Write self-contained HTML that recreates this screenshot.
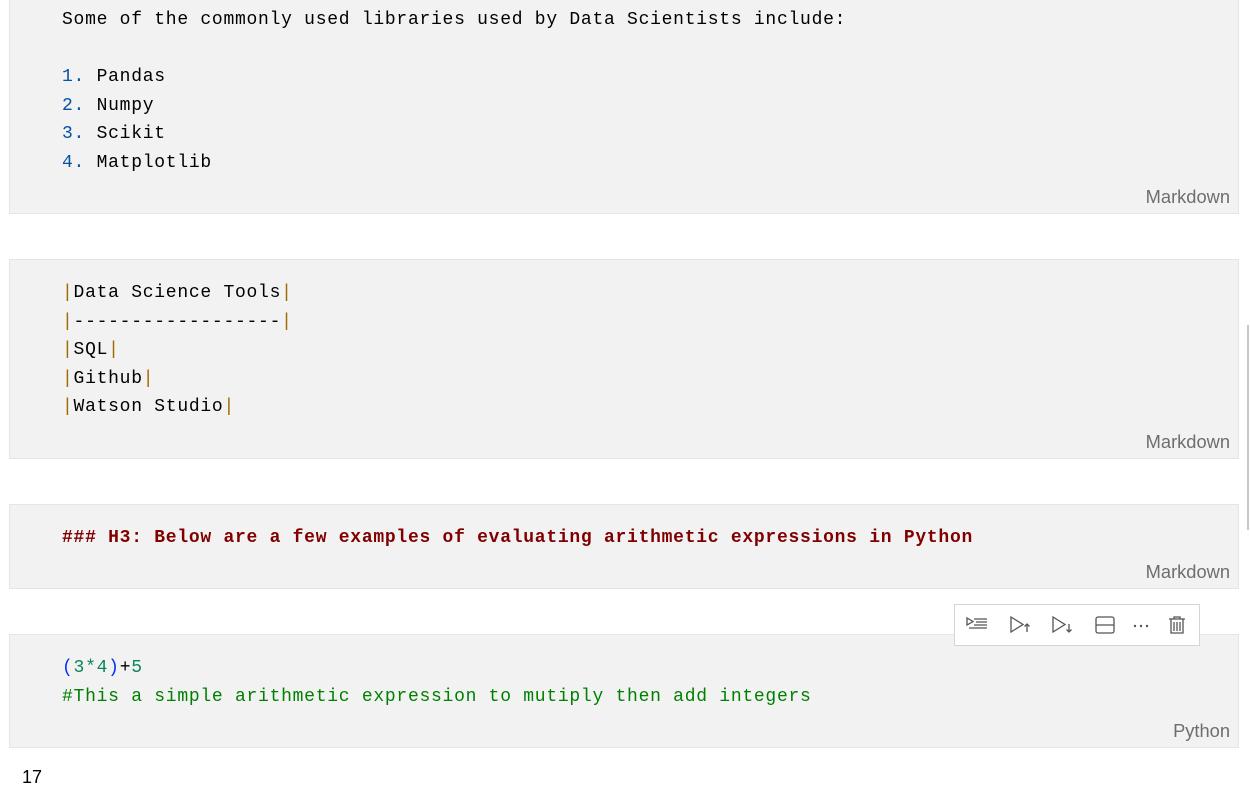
<!DOCTYPE html>
<html><head><meta charset="utf-8"><style>
body{margin:0;width:1250px;height:806px;background:#fff;position:relative;overflow:hidden;font-family:"Liberation Mono",monospace}
.cell{position:absolute;left:9px;width:1228px;background:#f2f2f2;border:1px solid #e5e5e5}
.l{position:absolute;left:62px;font-size:18px;letter-spacing:0.73px;line-height:28px;height:28px;white-space:pre;color:#000}
.lab{position:absolute;right:20px;font-family:"Liberation Sans",sans-serif;font-size:18.3px;color:#6e6e6e;line-height:20px}
.n{color:#0451a5}.p{color:#a06a00}
.h{color:#800000;font-weight:bold}
.c{color:#008000}
</style></head><body>
<div class="cell" style="top:-2px;height:214px"></div>
<div class="l" style="top:6px">Some of the commonly used libraries used by Data Scientists include:</div>
<div class="l" style="top:63px"><span class="n">1.</span> Pandas</div>
<div class="l" style="top:92px"><span class="n">2.</span> Numpy</div>
<div class="l" style="top:120px"><span class="n">3.</span> Scikit</div>
<div class="l" style="top:149px"><span class="n">4.</span> Matplotlib</div>
<div class="lab" style="top:187px;right:20px">Markdown</div>

<div class="cell" style="top:259px;height:198px"></div>
<div class="l" style="top:279px"><span class="p">|</span>Data Science Tools<span class="p">|</span></div>
<div class="l" style="top:308px"><span class="p">|</span>------------------<span class="p">|</span></div>
<div class="l" style="top:336px"><span class="p">|</span>SQL<span class="p">|</span></div>
<div class="l" style="top:365px"><span class="p">|</span>Github<span class="p">|</span></div>
<div class="l" style="top:393px"><span class="p">|</span>Watson Studio<span class="p">|</span></div>
<div class="lab" style="top:432px">Markdown</div>

<div class="cell" style="top:504px;height:83px"></div>
<div class="l h" style="top:524px">### H3: Below are a few examples of evaluating arithmetic expressions in Python</div>
<div class="lab" style="top:562px">Markdown</div>

<div class="cell" style="top:634px;height:112px"></div>
<div class="l" style="top:654px"><span style="color:#0431fa">(</span><span style="color:#098658">3*4</span><span style="color:#0431fa">)</span>+<span style="color:#098658">5</span></div>
<div class="l c" style="top:683px">#This a simple arithmetic expression to mutiply then add integers</div>
<div class="lab" style="top:721px">Python</div>

<div style="position:absolute;left:22px;top:767px;font-family:'Liberation Sans',sans-serif;font-size:18px;color:#000">17</div>

<div style="position:absolute;left:954px;top:604px;width:244px;height:40px;background:#fff;border:1px solid #d4d4d4">
<svg width="244" height="40" viewBox="0 0 244 40" fill="none" stroke="#555" stroke-width="1.3">
<path d="M12 13v7l6-3.5z"/><path d="M19 14h13M21 17h11M19 20h13M14 23h18"/>
<path d="M56 12v15l12-7.5z"/><path d="M72 27v-8M69.5 21.5l2.5-2.5 2.5 2.5"/>
<path d="M98 12v15l12-7.5z"/><path d="M114 19v8M111.5 24.5l2.5 2.5 2.5-2.5"/>
<rect x="141" y="12" width="18" height="16" rx="2"/><path d="M141 20h18"/>
<g fill="#555" stroke="none"><circle cx="180" cy="21" r="1.2"/><circle cx="186" cy="21" r="1.2"/><circle cx="192" cy="21" r="1.2"/></g>
<path d="M214 14h16M219 14v-2h6v2M216 14v14h12v-14M219 17v9M222 17v9M225 17v9"/>
</svg></div>
<div style="position:absolute;left:1247px;top:325px;width:2px;height:205px;background:#c8c8c8"></div>
</body></html>
